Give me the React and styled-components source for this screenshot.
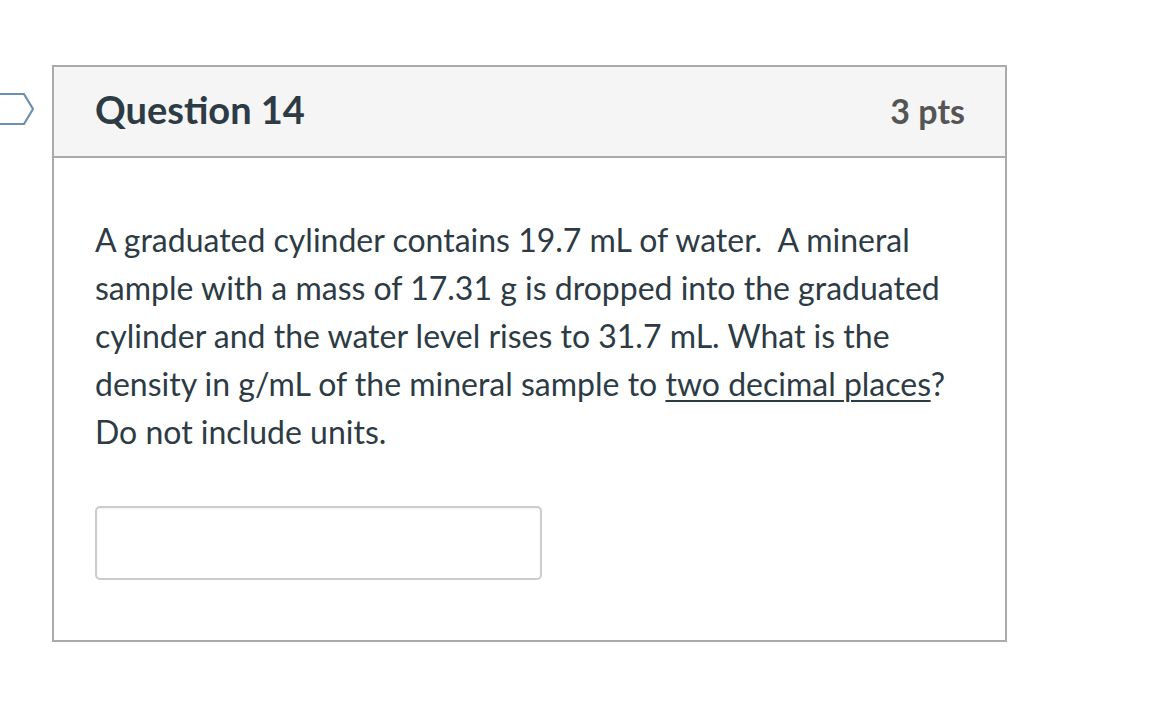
import React from "react";
import styled, { createGlobalStyle } from "styled-components";

const Global = createGlobalStyle`
  html, body { margin: 0; padding: 0; background: #fff; }
  body { font-family: Lato, "Open Sans", sans-serif; color: #2d3b45; }
`;

const Page = styled.div`
  position: relative;
  padding: 65px 0 0 52px;
  width: 1166px;
  height: 718px;
  box-sizing: border-box;
`;

const Flag = styled.svg`
  position: absolute;
  left: 0;
  top: 92px;
`;

const Card = styled.section`
  width: 955px;
  box-sizing: border-box;
  border: 2px solid #aaaaaa;
  background: #fff;
`;

const Header = styled.header`
  display: flex;
  align-items: center;
  justify-content: space-between;
  height: 91px;
  box-sizing: border-box;
  padding: 0 40px 2px 41px;
  background: #f5f5f5;
  border-bottom: 2px solid #aaaaaa;
`;

const Title = styled.h2`
  margin: 0 0 3px;
  font-size: 38px;
  font-weight: 700;
  line-height: 1;
  color: #2d3b45;
`;

const Points = styled.span`
  font-size: 34px;
  font-weight: 700;
  line-height: 1;
  color: #555555;
`;

const Body = styled.div`
  padding: 58px 40px 60px 41px;
`;

const Text = styled.p`
  margin: 0;
  font-size: 32px;
  line-height: 48px;
  color: #2d3b45;
`;

const Underline = styled.span`
  text-decoration: underline;
  text-decoration-thickness: 2px;
  text-underline-offset: 4px;
`;

const Answer = styled.input`
  display: block;
  margin-top: 50px;
  width: 447px;
  height: 74px;
  box-sizing: border-box;
  border: 2px solid #cccccc;
  border-radius: 5px;
  background: #fff;
  box-shadow: inset 0 1px 2px rgba(0, 0, 0, 0.06);
  outline: none;
`;

export default function App() {
  return (
    <>
      <Global />
      <Page>
        <Flag width="36" height="34" viewBox="0 0 36 34">
          <path
            d="M-4 2 H24 L33 17 L24 32 H-4"
            fill="none"
            stroke="#6b8fae"
            strokeWidth="2.2"
            strokeLinejoin="round"
          />
        </Flag>
        <Card>
          <Header>
            <Title>Question 14</Title>
            <Points>3 pts</Points>
          </Header>
          <Body>
            <Text>
              A graduated cylinder contains 19.7 mL of water.&nbsp; A mineral
              sample with a mass of 17.31 g is dropped into the graduated
              cylinder and the water level rises to 31.7 mL. What is the
              density in g/mL of the mineral sample to{" "}
              <Underline>two decimal places</Underline>? Do not include units.
            </Text>
            <Answer type="text" aria-label="Answer" />
          </Body>
        </Card>
      </Page>
    </>
  );
}
